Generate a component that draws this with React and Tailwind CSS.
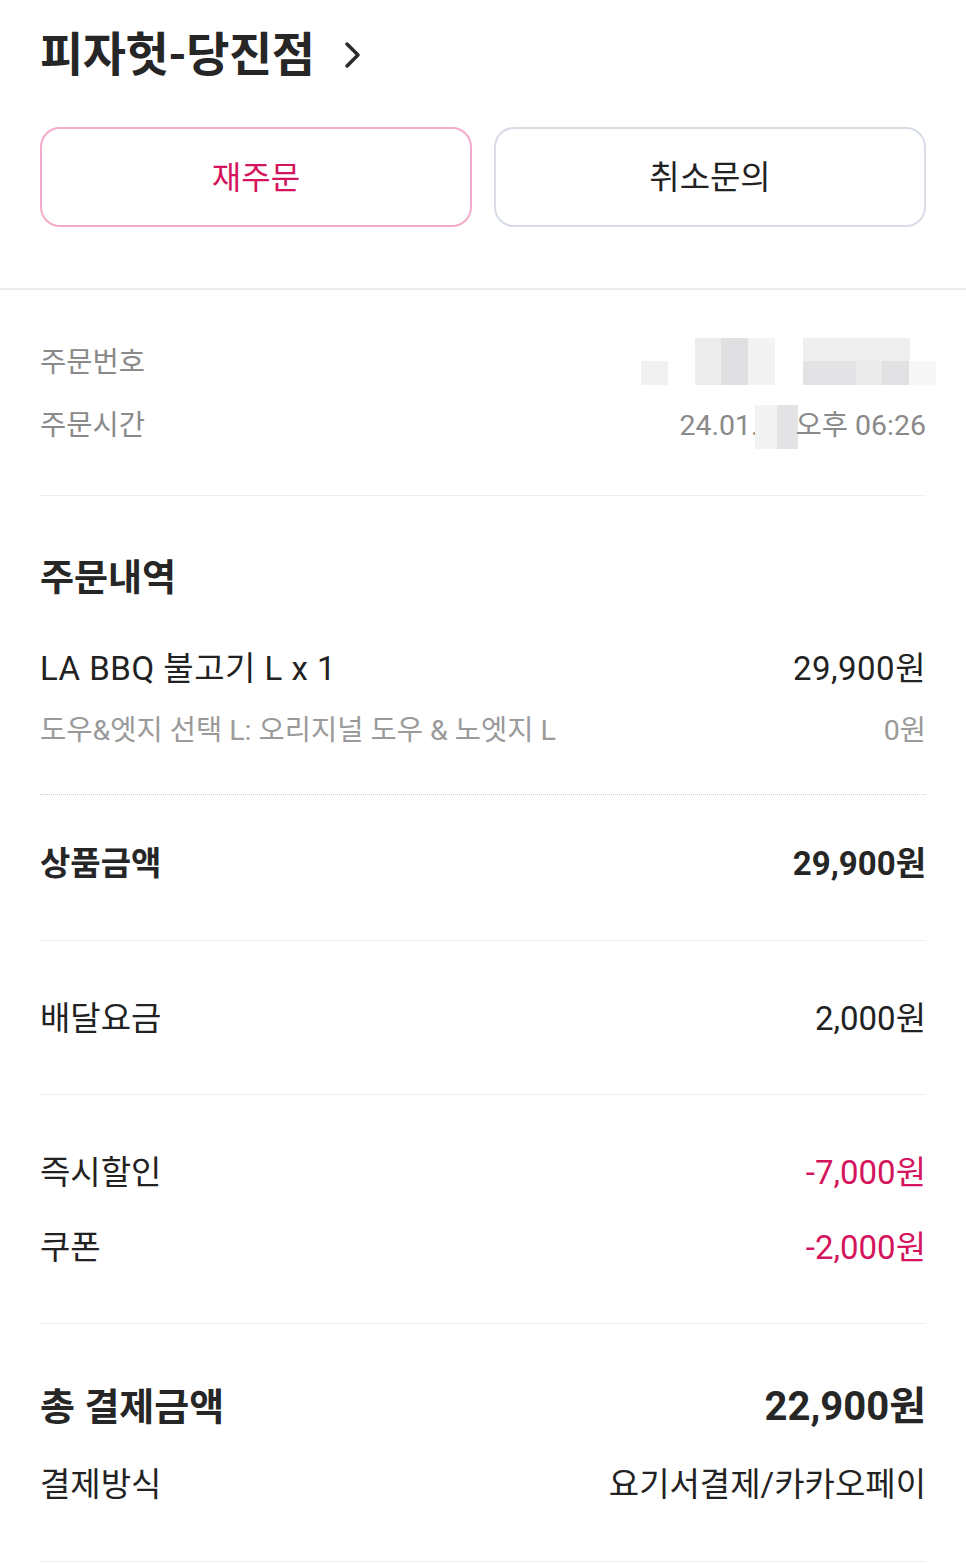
import React from 'react'

const font = { fontFamily: "Roboto, 'Noto Sans CJK KR', sans-serif" }

const Row = ({ label, value, className = '', valueClass = '' }) => (
  <div className={`flex items-center justify-between pt-[4px] ${className}`}>
    <span>{label}</span>
    <span className={valueClass}>{value}</span>
  </div>
)

const BlurredNumber = () => (
  <svg width="295" height="48" viewBox="0 0 295 48" className="mr-[-10px] -mt-[4px]">
    <rect x="0" y="23" width="27" height="24" fill="#f1f1f2" />
    <rect x="54" y="0" width="27" height="47" fill="#ececed" />
    <rect x="80" y="0" width="27" height="47" fill="#e0e0e2" />
    <rect x="107" y="0" width="27" height="47" fill="#f3f3f4" />
    <rect x="162" y="0" width="107" height="23" fill="#efeff0" />
    <rect x="162" y="23" width="53" height="24" fill="#e3e3e5" />
    <rect x="215" y="23" width="27" height="24" fill="#ebebec" />
    <rect x="241" y="23" width="27" height="24" fill="#e1e1e3" />
    <rect x="268" y="23" width="27" height="24" fill="#f7f7f8" />
  </svg>
)

export default function App() {
  return (
    <div className="w-[966px] min-h-[1563px] bg-white text-[#222]" style={font}>
      {/* header */}
      <div className="px-10 pt-[27px]">
        <div className="flex items-center h-[56px]">
          <h1 className="text-[47px] font-bold tracking-[-0.5px] text-[#262626]">피자헛-당진점</h1>
          <svg width="22" height="30" viewBox="0 0 22 30" className="ml-[28px]">
            <path d="M5 4 L16 15 L5 26" fill="none" stroke="#2a2a2a" strokeWidth="3.5" strokeLinecap="round" strokeLinejoin="round" />
          </svg>
        </div>
        <div className="grid grid-cols-2 gap-[22px] mt-[44px]">
          <button className="h-[100px] rounded-[20px] border-2 border-[#f4abcb] text-[32px] text-[#d4145c] pt-[2px]">재주문</button>
          <button className="h-[100px] rounded-[20px] border-2 border-[#d7dce7] text-[33px] text-[#222] pt-[2px]">취소문의</button>
        </div>
      </div>
      <div className="h-[2px] bg-[#ebebeb] mt-[61px]" />

      <div className="px-10">
        {/* order info */}
        <div className="pt-[40px] pb-[39px] border-b border-[#eeeeee] text-[28.5px] text-[#8a8a8a]">
          <div className="flex items-center justify-between h-[63px] pt-[4px]">
            <span>주문번호</span>
            <BlurredNumber />
          </div>
          <div className="flex items-center justify-between h-[63px] pt-[4px]">
            <span>주문시간</span>
            <span className="flex items-center">
              24.01.
              <span className="inline-flex h-[44px] -ml-[4px]">
                <span className="w-[22px] bg-[#f3f3f4]" />
                <span className="w-[21px] bg-[#e3e3e5]" />
              </span>
              <span className="-ml-[2px]">오후 06:26</span>
            </span>
          </div>
        </div>

        {/* order items */}
        <div className="pt-[51px] pb-[34px] border-b border-dotted border-[#cfcfcf]">
          <h2 className="h-[60px] flex items-center pt-[4px] text-[37px] font-bold text-[#262626]">주문내역</h2>
          <Row label="LA BBQ 불고기 L x 1" value="29,900원" className="mt-[28px] h-[63px] text-[33px] tracking-[0.5px] text-[#222]" />
          <Row label="도우&엣지 선택 L: 오리지널 도우 & 노엣지 L" value="0원" className="h-[62px] text-[28.5px] text-[#9a9a9a]" />
        </div>

        <div className="pt-[37px] pb-[48px] border-b border-[#efefef]">
          <Row label="상품금액" value="29,900원" className="h-[60px] text-[33px] font-bold text-[#262626]" />
        </div>

        <div className="pt-[46px] pb-[47px] border-b border-[#efefef]">
          <Row label="배달요금" value="2,000원" className="h-[60px] text-[33px]" />
        </div>

        <div className="pt-[39px] pb-[39px] border-b border-[#efefef] text-[33px]">
          <Row label="즉시할인" value="-7,000원" className="h-[74px]" valueClass="text-[#d4145c]" />
          <Row label="쿠폰" value="-2,000원" className="h-[76px]" valueClass="text-[#d4145c]" />
        </div>

        <div className="pt-[51px] pb-[48px] border-b border-[#efefef]">
          <Row label="총 결제금액" value="22,900원" className="h-[60px] text-[38px] font-bold text-[#262626]" valueClass="text-[40px]" />
          <Row label="결제방식" value="요기서결제/카카오페이" className="mt-[18px] h-[60px] text-[33px]" />
        </div>
      </div>
    </div>
  )
}
